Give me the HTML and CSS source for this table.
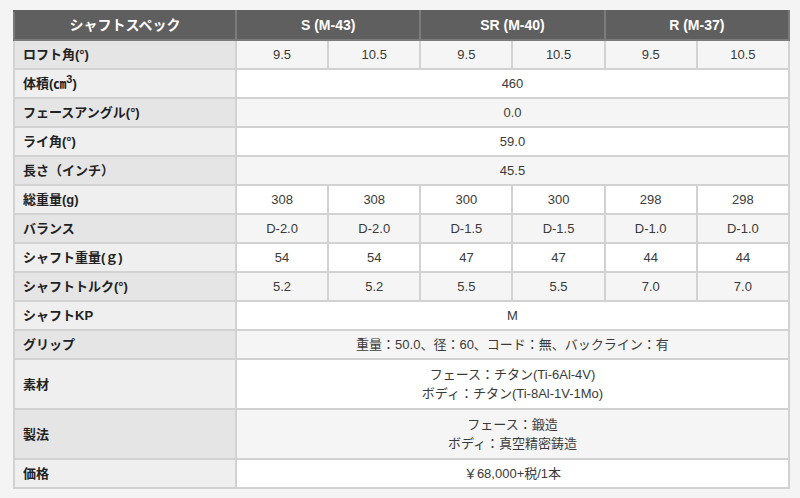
FILE: index.html
```html
<!DOCTYPE html>
<html lang="ja">
<head>
<meta charset="utf-8">
<link rel="stylesheet" href="styles.css">
</head>
<body>
<table class="spec">
  <colgroup>
    <col class="c-label">
    <col class="c-val"><col class="c-val"><col class="c-val"><col class="c-val"><col class="c-val"><col class="c-val">
  </colgroup>
  <thead>
    <tr><th>シャフトスペック</th><th colspan="2">S (M-43)</th><th colspan="2">SR (M-40)</th><th colspan="2">R (M-37)</th></tr>
  </thead>
  <tbody>
    <tr class="odd"><th>ロフト角(°)</th><td>9.5</td><td>10.5</td><td>9.5</td><td>10.5</td><td>9.5</td><td>10.5</td></tr>
    <tr class="even"><th>体積(㎝<sup>3</sup>)</th><td colspan="6">460</td></tr>
    <tr class="odd"><th>フェースアングル(°)</th><td colspan="6">0.0</td></tr>
    <tr class="even"><th>ライ角(°)</th><td colspan="6">59.0</td></tr>
    <tr class="odd"><th>長さ（インチ）</th><td colspan="6">45.5</td></tr>
    <tr class="even"><th>総重量(g)</th><td>308</td><td>308</td><td>300</td><td>300</td><td>298</td><td>298</td></tr>
    <tr class="odd"><th>バランス</th><td>D-2.0</td><td>D-2.0</td><td>D-1.5</td><td>D-1.5</td><td>D-1.0</td><td>D-1.0</td></tr>
    <tr class="even"><th>シャフト重量(ｇ)</th><td>54</td><td>54</td><td>47</td><td>47</td><td>44</td><td>44</td></tr>
    <tr class="odd"><th>シャフトトルク(°)</th><td>5.2</td><td>5.2</td><td>5.5</td><td>5.5</td><td>7.0</td><td>7.0</td></tr>
    <tr class="even"><th>シャフトKP</th><td colspan="6">M</td></tr>
    <tr class="odd"><th>グリップ</th><td colspan="6">重量：50.0、径：60、コード：無、バックライン：有</td></tr>
    <tr class="even tall"><th>素材</th><td colspan="6">フェース：チタン(Ti-6Al-4V)<br>ボディ：チタン(Ti-8Al-1V-1Mo)</td></tr>
    <tr class="odd tall"><th>製法</th><td colspan="6">フェース：鍛造<br>ボディ：真空精密鋳造</td></tr>
    <tr class="even"><th>価格</th><td colspan="6">￥68,000+税/1本</td></tr>
  </tbody>
</table>
</body>
</html>
```

FILE: styles.css
```css
html, body {
  margin: 0;
  padding: 0;
  background: #f4f4f4;
}
body {
  padding: 10px 10px 0 13px;
  font-family: "Liberation Sans", "Noto Sans CJK JP", sans-serif;
  color: #3a3a3a;
}
.spec {
  width: 777px;
  border-collapse: collapse;
  table-layout: fixed;
  font-size: 13px;
  line-height: 19px;
}
.c-label { width: 222px; }
.spec th, .spec td {
  border: 2px solid #d2d2d2;
  height: 25px;
  padding: 1px 8px;
}
.spec thead th {
  background: #5f5f5f;
  color: #fff;
  font-size: 14px;
  font-weight: bold;
  text-align: center;
  border-color: #7b7b7b;
  border-top-color: #5f5f5f;
  height: 25px;
}
.spec tbody th {
  text-align: left;
  font-weight: bold;
  padding-left: 8px;
  color: #222;
}
.spec td {
  text-align: center;
  font-weight: normal;
}
.odd th { background: #e5e5e5; }
.even th { background: #efefef; }
.odd td { background: #f5f5f5; }
.even td { background: #ffffff; }
.tall th, .tall td { height: 46px; }
sup {
  font-size: 11px;
  line-height: 0;
  vertical-align: 5px;
}
```
